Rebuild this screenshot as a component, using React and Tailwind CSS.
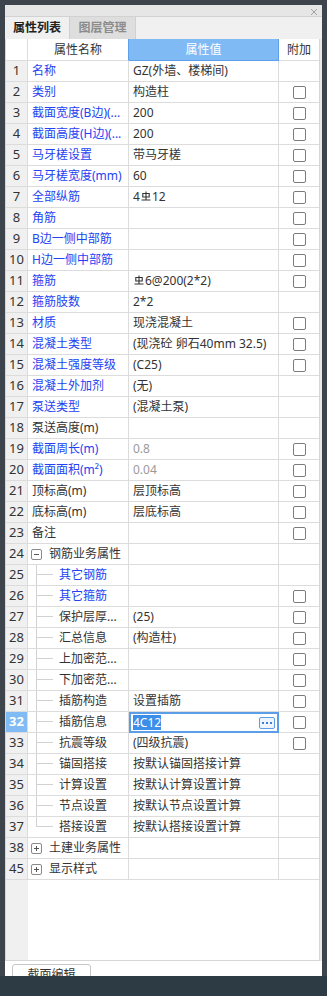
const BLUE = 'text-[#2542f2]'

const ROWS = [
  { n: 1, name: '名称', blue: true, value: 'GZ(外墙、楼梯间)' },
  { n: 2, name: '类别', blue: true, value: '构造柱', cb: true },
  { n: 3, name: '截面宽度(B边)(...', blue: true, value: '200', cb: true },
  { n: 4, name: '截面高度(H边)(...', blue: true, value: '200', cb: true },
  { n: 5, name: '马牙槎设置', blue: true, value: '带马牙槎', cb: true },
  { n: 6, name: '马牙槎宽度(mm)', blue: true, value: '60', cb: true },
  { n: 7, name: '全部纵筋', blue: true, rebar: ['4', '12'], cb: true },
  { n: 8, name: '角筋', blue: true, cb: true },
  { n: 9, name: 'B边一侧中部筋', blue: true, cb: true },
  { n: 10, name: 'H边一侧中部筋', blue: true, cb: true },
  { n: 11, name: '箍筋', blue: true, rebar: ['', '6@200(2*2)'], cb: true },
  { n: 12, name: '箍筋肢数', blue: true, value: '2*2' },
  { n: 13, name: '材质', blue: true, value: '现浇混凝土', cb: true },
  { n: 14, name: '混凝土类型', blue: true, value: '(现浇砼 卵石40mm 32.5)', cb: true },
  { n: 15, name: '混凝土强度等级', blue: true, value: '(C25)', cb: true },
  { n: 16, name: '混凝土外加剂', blue: true, value: '(无)' },
  { n: 17, name: '泵送类型', blue: true, value: '(混凝土泵)' },
  { n: 18, name: '泵送高度(m)' },
  { n: 19, name: '截面周长(m)', blue: true, value: '0.8', gray: true, cb: true },
  { n: 20, name: '截面面积(m²)', blue: true, value: '0.04', gray: true, cb: true },
  { n: 21, name: '顶标高(m)', value: '层顶标高', cb: true },
  { n: 22, name: '底标高(m)', value: '层底标高', cb: true },
  { n: 23, name: '备注', cb: true },
  { n: 24, name: '钢筋业务属性', group: 'open' },
  { n: 25, name: '其它钢筋', child: true, blue: true },
  { n: 26, name: '其它箍筋', child: true, blue: true, cb: true },
  { n: 27, name: '保护层厚...', child: true, value: '(25)', cb: true },
  { n: 28, name: '汇总信息', child: true, value: '(构造柱)', cb: true },
  { n: 29, name: '上加密范...', child: true, cb: true },
  { n: 30, name: '下加密范...', child: true, cb: true },
  { n: 31, name: '插筋构造', child: true, value: '设置插筋', cb: true },
  { n: 32, name: '插筋信息', child: true, editing: '4C12', cb: true },
  { n: 33, name: '抗震等级', child: true, value: '(四级抗震)', cb: true },
  { n: 34, name: '锚固搭接', child: true, value: '按默认锚固搭接计算' },
  { n: 35, name: '计算设置', child: true, value: '按默认计算设置计算' },
  { n: 36, name: '节点设置', child: true, value: '按默认节点设置计算' },
  { n: 37, name: '搭接设置', child: true, value: '按默认搭接设置计算', last: true },
  { n: 38, name: '土建业务属性', group: 'closed' },
  { n: 45, name: '显示样式', group: 'closed' },
]

function Check() {
  return <span className="block w-[13px] h-[13px] rounded-[2px] border border-[#7c7c7c] bg-white" />
}

// steel grade glyph (HRB400), not in unicode
function RebarMark() {
  return (
    <svg width="10" height="10" viewBox="0 0 10 10" className="inline-block mx-[1px] align-[0px]">
      <path d="M5 0.5V8.5M1.8 2.5h6.4v3.5H1.8z M0.5 9h9" stroke="#333" fill="none" strokeWidth="1.1" />
    </svg>
  )
}

function NameCell({ r }) {
  if (r.group) {
    return (
      <div className="flex items-center border-r border-b border-[#dcdcdc] whitespace-nowrap overflow-hidden">
        <span className="ml-[3px] w-[11px] h-[11px] shrink-0 rounded-[2px] border border-[#8a8a8a] flex items-center justify-center">
          <svg width="7" height="7" viewBox="0 0 7 7">
            <path d={r.group === 'open' ? 'M1 3.5h5' : 'M1 3.5h5M3.5 1v5'} stroke="#555" strokeWidth="1" />
          </svg>
        </span>
        <span className="ml-[7px]">{r.name}</span>
      </div>
    )
  }
  if (r.child) {
    return (
      <div className="flex items-stretch border-r border-b border-[#dcdcdc] whitespace-nowrap overflow-hidden">
        <div className="w-[8px] shrink-0" />
        <div className="w-[17px] shrink-0 flex flex-col">
          <div className="h-[10px] border-l border-b border-[#d2d2d2]" />
          <div className={r.last ? 'flex-1' : 'flex-1 border-l border-[#d2d2d2]'} />
        </div>
        <span className={`ml-[6px] self-center ${r.blue ? BLUE : ''}`}>{r.name}</span>
      </div>
    )
  }
  return (
    <div className="flex items-center pl-[4px] border-r border-b border-[#dcdcdc] whitespace-nowrap overflow-hidden">
      <span className={r.blue ? BLUE : ''}>{r.name}</span>
    </div>
  )
}

function ValueCell({ r }) {
  if (r.editing) {
    return (
      <div className="flex items-center border-2 border-[#5c9de8] pl-[2px] pr-[2px] bg-white">
        <span className="bg-[#3d8ee8] text-white leading-[15px]">{r.editing}</span>
        <span className="ml-auto w-[16px] h-[12px] rounded-[2px] border border-[#5c9de8] bg-[#eef5fd] flex items-center justify-center gap-[2px]">
          <span className="w-[2px] h-[2px] bg-[#3d7fd6]" />
          <span className="w-[2px] h-[2px] bg-[#3d7fd6]" />
          <span className="w-[2px] h-[2px] bg-[#3d7fd6]" />
        </span>
      </div>
    )
  }
  return (
    <div
      className={`flex items-center pl-[4px] border-r border-b border-[#dcdcdc] whitespace-nowrap overflow-hidden ${
        r.gray ? 'text-[#9a9a9a]' : ''
      }`}
    >
      {r.rebar ? (
        <span>
          {r.rebar[0]}
          <RebarMark />
          {r.rebar[1]}
        </span>
      ) : (
        r.value
      )}
    </div>
  )
}

function Row({ r }) {
  const sel = r.n === 32
  return (
    <div className="grid grid-cols-[22px_101px_150px_40px] h-[21px] shrink-0">
      <div
        className={`flex items-center justify-center border-r border-b border-[#dcdcdc] text-[13px] ${
          sel ? 'bg-[#80bbf5] text-white font-bold' : 'bg-[#f0f0f0]'
        }`}
      >
        {r.n}
      </div>
      <NameCell r={r} />
      <ValueCell r={r} />
      <div className="flex items-center justify-center border-b border-[#dcdcdc]">{r.cb && <Check />}</div>
    </div>
  )
}

export default function App() {
  return (
    <div className="w-[327px] h-[996px] bg-[#3d444b] flex flex-col [font-family:'Noto_Sans','Noto_Sans_CJK_SC',sans-serif] text-[12px] text-[#333]">
      <div className="flex-1 min-h-0 flex flex-col mx-[5px] mt-[5px] bg-[#e9e9e9] overflow-hidden">
        {/* Title bar */}
        <div className="h-[12px] shrink-0 bg-[#e6e6e6] border-b border-[#d2d2d2] flex justify-end items-start pr-[4px] pt-[3px]">
          <svg width="8" height="8" viewBox="0 0 8 8">
            <path d="M1 1l6 6M7 1L1 7" stroke="#a3a3a3" strokeWidth="1" />
          </svg>
        </div>

        {/* Tabs */}
        <div className="h-[22px] shrink-0 bg-[#f0f0f0] flex">
          <div className="w-[65px] flex items-center justify-center font-bold text-[#222] border-r border-[#d0d0d0]">
            属性列表
          </div>
          <div className="w-[66px] flex items-center justify-center font-bold text-[#8c8c8c] bg-[#dedede] border-r border-[#d0d0d0]">
            图层管理
          </div>
        </div>

        {/* Property grid */}
        <div className="flex-1 min-h-0 flex flex-col w-[315px] bg-white border-l border-r border-b border-[#d6d6d6]">
          <div className="grid grid-cols-[22px_101px_150px_40px] h-[22px] shrink-0">
            <div className="border-r border-b border-[#dcdcdc]" />
            <div className="flex items-center justify-center border-r border-b border-[#dcdcdc] border-r-[#5d9fe8]">
              属性名称
            </div>
            <div className="flex items-center justify-center bg-[#7fbaf5] text-white border-r border-b border-[#5d9fe8]">
              属性值
            </div>
            <div className="flex items-center justify-center border-b border-[#dcdcdc]">附加</div>
          </div>
          {ROWS.map(r => (
            <Row key={r.n} r={r} />
          ))}
          <div className="flex-1 flex">
            <div className="w-[22px] bg-[#f0f0f0]" />
          </div>
        </div>

        {/* Footer */}
        <div className="h-[15px] shrink-0 bg-white overflow-hidden">
          <button className="ml-[7px] mt-[3px] w-[79px] h-[22px] rounded-[3px] border border-[#c6c6c6] bg-white text-[#333]">
            截面编辑
          </button>
        </div>
      </div>
      <div className="h-[20px] shrink-0 bg-[#2c3b44]" />
    </div>
  )
}
